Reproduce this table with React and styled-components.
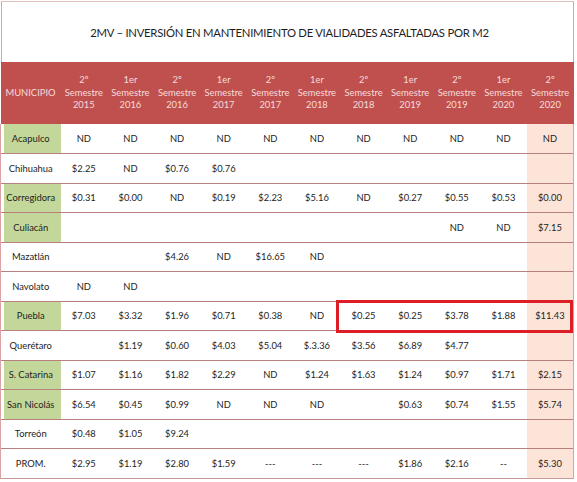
import styled, { createGlobalStyle } from "styled-components"

const GlobalStyle = createGlobalStyle`
    body {
        margin: 0;
        background: #ffffff;
        font-family: Lato, "Open Sans", sans-serif;
    }
`

const columns = [
    ["2º", "2015"], ["1er", "2016"], ["2º", "2016"], ["1er", "2017"],
    ["2º", "2017"], ["1er", "2018"], ["2º", "2018"], ["1er", "2019"],
    ["2º", "2019"], ["1er", "2020"], ["2º", "2020"],
]

const rows = [
    { name: "Acapulco", green: true, values: ["ND", "ND", "ND", "ND", "ND", "ND", "ND", "ND", "ND", "ND", "ND"] },
    { name: "Chihuahua", values: ["$2.25", "ND", "$0.76", "$0.76", "", "", "", "", "", "", ""] },
    { name: "Corregidora", green: true, values: ["$0.31", "$0.00", "ND", "$0.19", "$2.23", "$5.16", "ND", "$0.27", "$0.55", "$0.53", "$0.00"] },
    { name: "Culiacán", green: true, values: ["", "", "", "", "", "", "", "", "ND", "ND", "$7.15"] },
    { name: "Mazatlán", values: ["", "", "$4.26", "ND", "$16.65", "ND", "", "", "", "", ""] },
    { name: "Navolato", values: ["ND", "ND", "", "", "", "", "", "", "", "", ""] },
    { name: "Puebla", green: true, marked: true, values: ["$7.03", "$3.32", "$1.96", "$0.71", "$0.38", "ND", "$0.25", "$0.25", "$3.78", "$1.88", "$11.43"] },
    { name: "Querétaro", values: ["", "$1.19", "$0.60", "$4.03", "$5.04", "$.3.36", "$3.56", "$6.89", "$4.77", "", ""] },
    { name: "S. Catarina", green: true, values: ["$1.07", "$1.16", "$1.82", "$2.29", "ND", "$1.24", "$1.63", "$1.24", "$0.97", "$1.71", "$2.15"] },
    { name: "San Nicolás", green: true, values: ["$6.54", "$0.45", "$0.99", "ND", "ND", "ND", "", "$0.63", "$0.74", "$1.55", "$5.74"] },
    { name: "Torreón", values: ["$0.48", "$1.05", "$9.24", "", "", "", "", "", "", "", ""] },
    { name: "PROM.", values: ["$2.95", "$1.19", "$2.80", "$1.59", "---", "---", "---", "$1.86", "$2.16", "--", "$5.30"] },
]

export default function App() {
    return (
        <>
            <GlobalStyle />
            <Page>
                <TitleBox>
                    <h1>2MV – INVERSIÓN EN MANTENIMIENTO DE VIALIDADES ASFALTADAS POR M2</h1>
                </TitleBox>
                <Table>
                    <colgroup>
                        <col style={{ width: 60 }} />
                        {columns.map((c, i) => <col key={i} />)}
                    </colgroup>
                    <thead>
                        <tr>
                            <HeadCell>MUNICIPIO</HeadCell>
                            {columns.map(([sem, year], i) => (
                                <HeadCell key={i}>
                                    {sem}<br />Semestre<br />{year}
                                </HeadCell>
                            ))}
                        </tr>
                    </thead>
                    <tbody>
                        {rows.map((row) => (
                            <Row key={row.name}>
                                <NameCell $green={row.green}>{row.name}</NameCell>
                                {row.values.map((v, i) => (
                                    <Cell key={i} $last={i === row.values.length - 1}>
                                        {v}
                                        {row.marked && i === 6 && <Marker />}
                                    </Cell>
                                ))}
                            </Row>
                        ))}
                    </tbody>
                </Table>
            </Page>
        </>
    )
}

const Page = styled.div`
    width: 574px;
    height: 482px;
    display: flex;
    flex-direction: column;
`

const TitleBox = styled.div`
    height: 61px;
    margin-left: 1px;
    margin-top: 1px;
    border-left: 1px solid #d9a3a6;
    border-top: 1px solid #e3bcbe;
    border-right: 1px solid #d9a3a6;
    display: flex;
    align-items: center;
    justify-content: center;
    box-sizing: border-box;
    padding-left: 4px;

    h1 {
        margin: 0;
        font-size: 11.3px;
        font-weight: 400;
        color: #1e1e1e;
        letter-spacing: -0.25px;
    }
`

const Table = styled.table`
    width: 574px;
    table-layout: fixed;
    border-collapse: collapse;
    border-spacing: 0;
`

const HeadCell = styled.th`
    background: #c0504d;
    color: #f6dcdc;
    font-weight: 400;
    font-size: 9.4px;
    line-height: 12.5px;
    height: 62px;
    padding: 0;
    text-align: center;
`

const Row = styled.tr`
    height: 29.5px;
    border-bottom: 1px solid #b98080;

    &:last-child {
        border-bottom: 1px solid #c89898;
    }
`

const NameCell = styled.td`
    background: ${(p) => (p.$green ? "#c4d79b" : "#ffffff")};
    box-shadow: inset 3px 0 0 #ffffff, inset 1px 0 0 #d9a3a6;
    border-left: 1px solid #d9a3a6;
    font-size: 9.4px;
    color: #1e1e1e;
    text-align: center;
    padding: 0;
    white-space: nowrap;
`

const Cell = styled.td`
    position: relative;
    background: ${(p) => (p.$last ? "#fce5d8" : "#ffffff")};
    border-right: ${(p) => (p.$last ? "1px solid #d9a3a6" : "none")};
    font-size: 9.4px;
    color: #1e1e1e;
    text-align: center;
    padding: 0;
    white-space: nowrap;
`

const Marker = styled.span`
    position: absolute;
    z-index: 2;
    left: -4px;
    top: -2px;
    width: 231px;
    height: 27px;
    border: 3px solid #dd1e26;
    pointer-events: none;
`
